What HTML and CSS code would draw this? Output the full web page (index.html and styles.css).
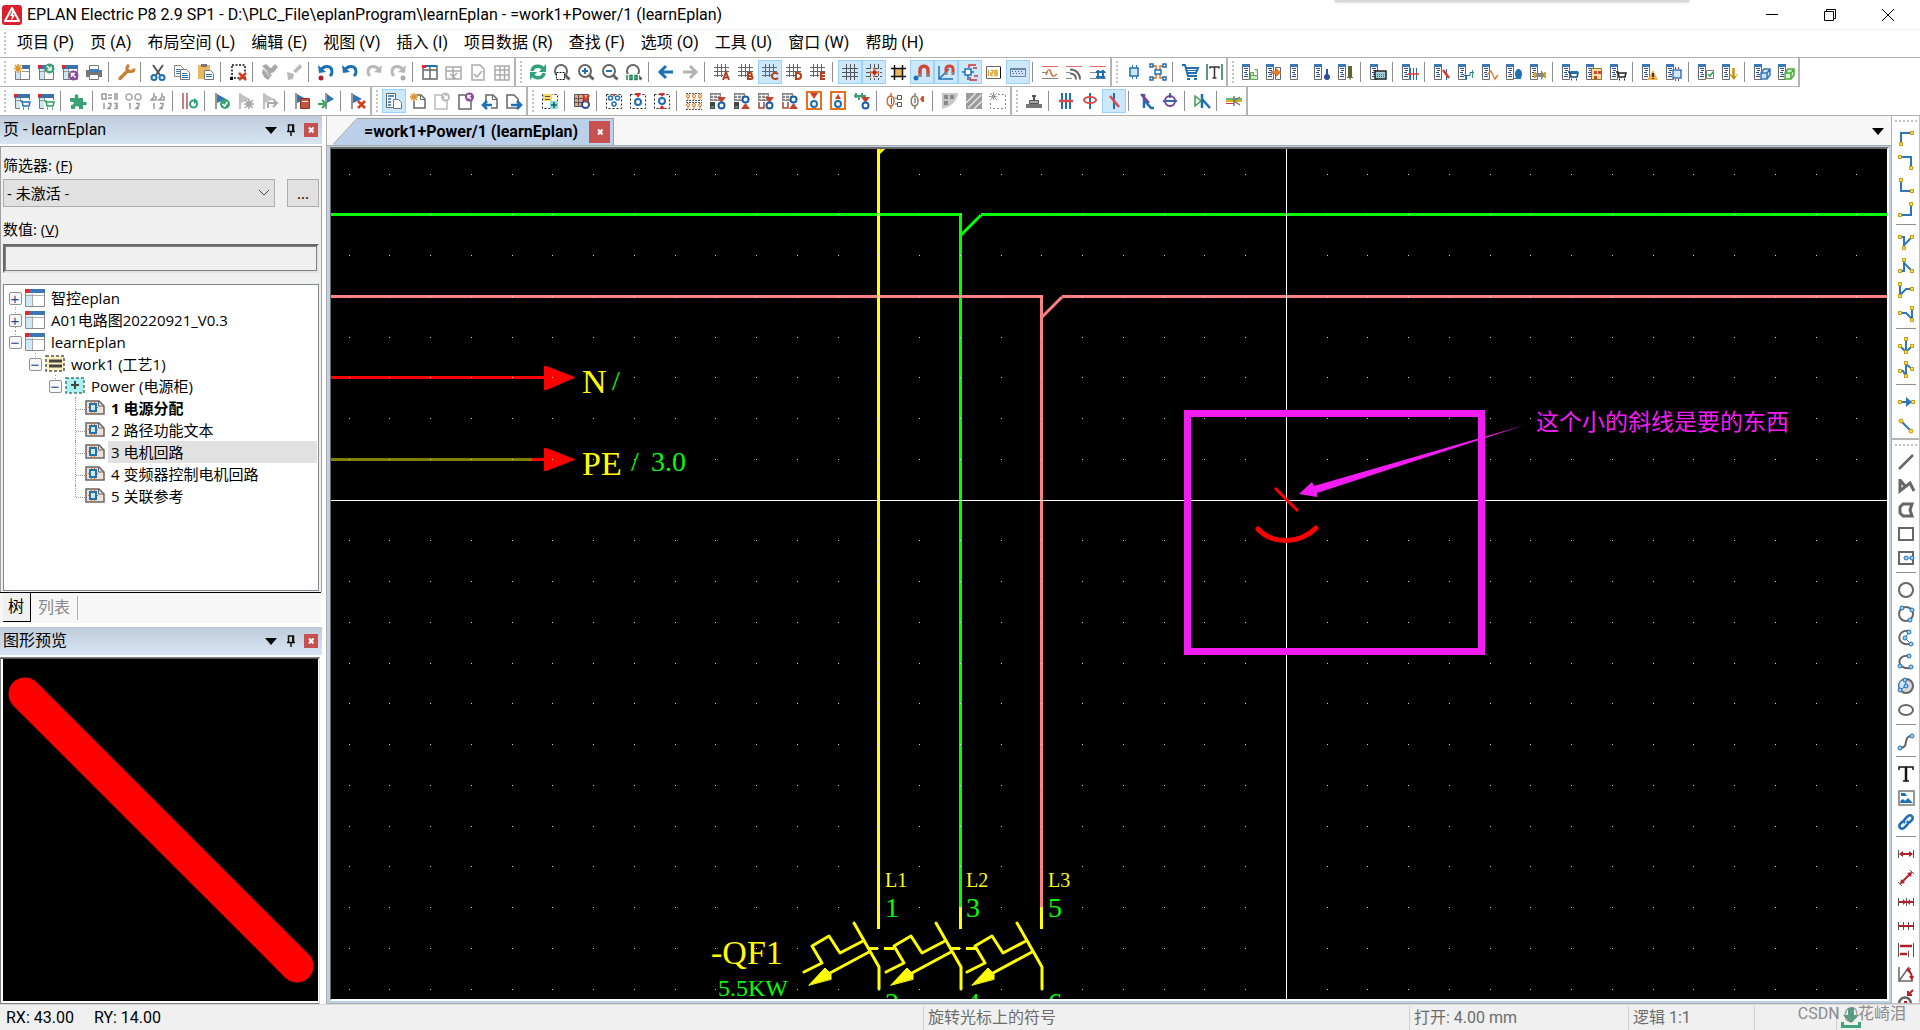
FILE: index.html
```html
<!DOCTYPE html>
<html lang="zh-CN">
<head>
<meta charset="utf-8">
<title>EPLAN Electric P8</title>
<link rel="stylesheet" href="styles.css">
</head>
<body>
<svg class="sprite" aria-hidden="true">
  <defs>
    <g id="b-win"><path fill="#fff" stroke="#777" d="M5.5 8.5h14v11h-14z"/><path fill="#3c72ac" d="M4 5h16v4H4z"/><path fill="#e22" d="M4 5h4v3H4z"/><path fill="#cfe6f5" d="M6 9h4v10H6z"/><path stroke="#999" d="M10.5 9v10M6 11.500h14"/></g>
    <g id="b-doc"><path fill="#fff" stroke="#6b6b6b" d="M4.500 6.500h7v13h-7z"/><path fill="#3b77b8" d="M4 4h8v3H4z"/><path stroke="#2b4a9b" d="M6 8.500h4M7 10.500h3M6 12.500h3M7 14.500h3M6 16.500h4"/></g>
    <g id="b-page"><path fill="#fff" stroke="#666" stroke-width="1.500" d="M8 6h7l4 4v9H8z"/><path stroke="#666" d="M14.500 6v4.500H19"/></g>
    <g id="b-grid"><path stroke="#555" d="M8.500 4v16M12.500 4v16M16.500 4v16M4 8.500h16M4 12.500h16M4 16.500h16"/></g>
    <g id="b-grids"><path stroke="#666" d="M7.500 4v13M11.500 4v13M15.500 4v9M4 7.500h15M4 11.500h15M4 15.500h9"/></g>
    <g id="b-cart" stroke-width="1.500"><path d="M10 12h2l1 5h6l1-4h-7"/><path d="M13 19.500h1M18 19.500h1" stroke-width="2"/></g>
    <g id="b-flag"><path stroke="#777" stroke-width="1.500" d="M6 4v16"/><path fill="#2d76b8" d="M7 5l9 5-9 4z"/></g>
    <g id="b-gflag"><path stroke="#aaa" stroke-width="1.500" d="M6 4v16"/><path fill="#c4c4c4" d="M7 5l9 5-9 4z"/></g>
    <g id="b-net"><path fill="#8a8a8a" d="M4 4h11v8H4z"/><path stroke="#eee" d="M5 6.500h9M5 9.500h9M7.500 5v6M11.500 5v6"/></g>
    <g id="b-dash"><path stroke="#222" stroke-dasharray="2 2" d="M4.500 5.500h15v14h-15z"/></g>
    <g id="b-down"><path fill="#c5432b" d="M11 8h9l-4.500 6z"/><circle cx="15.500" cy="16.500" r="3" fill="#fff" stroke="#1a5fa6" stroke-width="2"/></g>
    <g id="b-up"><path fill="#c5432b" d="M11 20h9l-4.500-6z"/><circle cx="15.500" cy="10.500" r="3" fill="#fff" stroke="#1a5fa6" stroke-width="2"/></g>
    <g id="dot"><path fill="#ffe066" stroke="#c8960c" d="M-1.500-1.500h3v3h-3z"/></g>
    <g id="bdot"><circle r="2" fill="#9fd0f5" stroke="#1f6fb5"/></g>

    <symbol id="new" viewBox="0 0 24 24"><use href="#b-win"/><path fill="#fff" d="M4 4h8v8H4z"/><path stroke="#e0962c" stroke-width="1.500" d="M8 4v9M4 8.500h9M5 5l6 7M11 5l-6 7"/></symbol>
    <symbol id="open" viewBox="0 0 24 24"><use href="#b-win"/><circle cx="15.500" cy="8.500" r="5" fill="#3aa173"/><path stroke="#fff" stroke-width="1.500" d="M13 6l4 4M17 6.500V10h-3.500"/></symbol>
    <symbol id="closep" viewBox="0 0 24 24"><use href="#b-win"/><circle cx="15.500" cy="15.500" r="5" fill="#8a4a9e"/><path stroke="#fff" stroke-width="1.500" d="M17.500 17.500l-4-4M13.500 17v-3.500H17"/></symbol>
    <symbol id="print" viewBox="0 0 24 24"><path fill="#777" d="M4 10h16v7H4z"/><path fill="#fff" stroke="#777" d="M7.500 5.500h9v5h-9z"/><path fill="#3b82c4" d="M7 9h10v3H7z"/><path fill="#fff" stroke="#777" d="M7.500 14.500h9v5h-9z"/></symbol>
    <symbol id="wrench" viewBox="0 0 24 24"><path stroke="#c97f34" stroke-width="3.500" stroke-linecap="round" d="M6 18.500l8-8"/><path stroke="#c97f34" stroke-width="3" d="M15 5c-3 2-3 7 2 6.500 2 0 3-1 3-3"/></symbol>
    <symbol id="cut" viewBox="0 0 24 24"><path stroke="#555" stroke-width="2" d="M7 5l7 10M17 5l-7 10"/><circle cx="8" cy="17.500" r="2.500" stroke="#1f6fb5" stroke-width="2"/><circle cx="16" cy="17.500" r="2.500" stroke="#1f6fb5" stroke-width="2"/></symbol>
    <symbol id="copy" viewBox="0 0 24 24"><path fill="#fff" stroke="#888" d="M4.500 5.500h6l3 3v8h-9z"/><path stroke="#3b82c4" d="M6 9.500h4M6 11.500h4M6 13.500h4"/><path fill="#fff" stroke="#777" d="M10.500 9.500h6l3 3v7h-9z"/><path stroke="#1f6fb5" d="M12 13.500h5M12 15.500h6M12 17.500h6"/></symbol>
    <symbol id="paste" viewBox="0 0 24 24"><path fill="#eeb65c" d="M4 5h12v14H4z"/><path fill="#777" d="M7 4h6v3H7z"/><path fill="#fff" stroke="#777" d="M10.500 10.500h6l3 3v6h-9z"/><path stroke="#1f6fb5" d="M12 14.500h6M12 16.500h6"/></symbol>
    <symbol id="seldel" viewBox="0 0 24 24"><path stroke="#111" stroke-width="1.500" stroke-dasharray="2 1.500" d="M6 5h13v13H6z"/><path fill="#111" d="M4 17h3v3H4z"/><path stroke="#d63a1e" stroke-width="2.500" d="M13 13l7 7M20 13l-7 7"/></symbol>
    <symbol id="brush" viewBox="0 0 24 24"><path fill="#a8a8a8" d="M17 4l3 3-5 6-4-3zM5 9l9 6-4 5-4-3-2-4z"/><path fill="#a8a8a8" d="M4 6l4-2 8 7-4 3z"/><path stroke="#ddd" d="M7 11l5 6"/></symbol>
    <symbol id="brush2" viewBox="0 0 24 24"><path fill="#b8b8b8" d="M18 4l2 3-6 6-3-2zM5 12l7 2-1 5-5 1z"/></symbol>
    <symbol id="undo" viewBox="0 0 24 24"><path fill="#1f6fb5" d="M4 5l1 8 7-1z"/><path stroke="#1f6fb5" stroke-width="3" d="M7 10c3-5 11-5 11 2 0 2-1 3-2 4"/></symbol>
    <symbol id="undol" viewBox="0 0 24 24"><use href="#undo" width="24" height="24"/><circle cx="7" cy="18" r="2.500" fill="#b3202a"/></symbol>
    <symbol id="redo" viewBox="0 0 24 24"><path fill="#b8b8b8" d="M20 5l-1 8-7-1z"/><path stroke="#b8b8b8" stroke-width="3" d="M17 10C14 5 6 5 6 12c0 2 1 3 2 4"/></symbol>
    <symbol id="redol" viewBox="0 0 24 24"><use href="#redo" width="24" height="24"/><circle cx="17" cy="18" r="2.500" fill="#aaa"/></symbol>
    <symbol id="layout" viewBox="0 0 24 24"><path fill="#fff" stroke="#666" stroke-width="1.500" d="M5 6h14v13H5zM5 10h14M12 6v13"/><path stroke="#1f6fb5" stroke-width="2" d="M5 6h14"/><path fill="#e22" d="M4 5h4v3H4z"/></symbol>
    <symbol id="lay2" viewBox="0 0 24 24"><path stroke="#aaa" stroke-width="1.500" d="M4 7h15v12H4zM4 11h15M11 7v12M8 14l6 5M15 13l-4 4"/></symbol>
    <symbol id="pcheck" viewBox="0 0 24 24"><path stroke="#aaa" stroke-width="1.500" d="M6 5h8l4 4v11H6zM8 14l3 3 5-6"/></symbol>
    <symbol id="gtable" viewBox="0 0 24 24"><path stroke="#aaa" stroke-width="1.500" d="M5 6h14v14H5zM5 10h14M5 15h14M10 6v14M14.500 6v14"/></symbol>
    <symbol id="refresh" viewBox="0 0 24 24"><path stroke="#2fa37b" stroke-width="3.500" d="M6 11c1-6 9-6 11-2M18 13c-1 6-9 6-11 2"/><path fill="#2fa37b" d="M20 4v8h-7zM4 20v-8h7z"/></symbol>
    <symbol id="mag" viewBox="0 0 24 24"><circle cx="11" cy="11" r="6" stroke="#666" stroke-width="2"/><path stroke="#666" stroke-width="3" d="M15.500 15.500l4 4"/></symbol>
    <symbol id="zwin" viewBox="0 0 24 24"><use href="#mag" width="24" height="24"/><path fill="#fff" stroke="#111" stroke-dasharray="2 1" d="M6.500 12.500h8v7h-8z"/></symbol>
    <symbol id="zin" viewBox="0 0 24 24"><use href="#mag" width="24" height="24"/><path stroke="#1f6fb5" stroke-width="2" d="M8 11h6M11 8v6"/></symbol>
    <symbol id="zout" viewBox="0 0 24 24"><use href="#mag" width="24" height="24"/><path stroke="#1f6fb5" stroke-width="2" d="M8 11h6"/></symbol>
    <symbol id="z100" viewBox="0 0 24 24"><use href="#mag" width="24" height="24"/><path fill="#fff" d="M4 14h13v7H4z"/><path stroke="#16804f" stroke-width="1.500" d="M5 15v5M8 15.500h2v4H8zM13 15.500h2v4h-2z"/></symbol>
    <symbol id="left" viewBox="0 0 24 24"><path stroke="#1f6fb5" stroke-width="3" d="M19 12H7M12 6l-6 6 6 6"/></symbol>
    <symbol id="right" viewBox="0 0 24 24"><path stroke="#b3b3b3" stroke-width="3" d="M5 12h12M12 6l6 6-6 6"/></symbol>
    <symbol id="gA" viewBox="0 0 24 24"><use href="#b-grids"/><path stroke="#b5411c" stroke-width="2" d="M13 20l3-8 3 8M14 17.500h4"/></symbol>
    <symbol id="gB" viewBox="0 0 24 24"><use href="#b-grids"/><path stroke="#b5411c" stroke-width="2" d="M14 12v7h3c2 0 2-3 0-3h-3 3c1 0 1-3 0-3h-3"/></symbol>
    <symbol id="gC" viewBox="0 0 24 24"><use href="#b-grids"/><path stroke="#b5411c" stroke-width="2" d="M20 14c-2-2-6-1-6 2s4 4 6 2"/></symbol>
    <symbol id="gD" viewBox="0 0 24 24"><use href="#b-grids"/><path stroke="#b5411c" stroke-width="2" d="M14 13v6h2c4 0 4-6 0-6z"/></symbol>
    <symbol id="gE" viewBox="0 0 24 24"><use href="#b-grids"/><path stroke="#b5411c" stroke-width="2" d="M19 13h-4v6h4M15 16h4"/></symbol>
    <symbol id="grid" viewBox="0 0 24 24"><use href="#b-grid"/></symbol>
    <symbol id="gsnap" viewBox="0 0 24 24"><path stroke="#555" stroke-dasharray="5 2" d="M8.500 4v16M12.500 4v16M16.500 4v16M4 8.500h16M4 12.500h16M4 16.500h16"/><path stroke="#e8701c" stroke-width="2" d="M12.500 8v9M8 12.500h9"/><circle cx="12.500" cy="12.500" r="2" fill="#b3202a"/></symbol>
    <symbol id="galign" viewBox="0 0 24 24"><path fill="#eeb65c" d="M9 9h7v7H9z"/><path stroke="#111" stroke-width="1.500" d="M8.500 5v15M16.500 5v15M5 8.500h15M5 16.500h15"/></symbol>
    <symbol id="magnet" viewBox="0 0 24 24"><path stroke="#cf4a35" stroke-width="3.500" d="M10 16v-6c0-5 8-5 8 0v6"/><path stroke="#888" stroke-width="3.500" d="M10 14v3M18 14v3"/><circle cx="6" cy="18" r="2.500" fill="#1f6fb5"/></symbol>
    <symbol id="magnet2" viewBox="0 0 24 24"><path stroke="#1f6fb5" stroke-width="1.500" d="M5 6v13h14M5 19L15 9"/><path stroke="#cf4a35" stroke-width="3" d="M12 13V9c0-4 7-4 7 0v4"/><path stroke="#888" stroke-width="3" d="M12 12v3M19 12v3"/></symbol>
    <symbol id="smart" viewBox="0 0 24 24"><path fill="#fff" stroke="#1f6fb5" stroke-width="1.500" d="M7 9h6v6H7zM4 12h3M10 15v5M13 12h3"/><path stroke="#d32f2f" stroke-width="1.500" d="M11 8V5h7M15 8h4M16 16h4M12 17v3h7"/></symbol>
    <symbol id="num" viewBox="0 0 24 24"><path fill="#fff" stroke="#666" d="M4.500 6.500h14v12h-14z"/><path stroke="#e0a82c" stroke-width="1.500" d="M6.500 10v6M9 10.500h2v2.500H9v2.500h2M13 10.500h2v5h-2zM13 13h2"/><path stroke="#111" d="M18.500 7v11"/></symbol>
    <symbol id="keys" viewBox="0 0 24 24"><path fill="#cfe0f2" stroke="#6b87a8" d="M4.500 8.500h15v8h-15z"/><path stroke="#6b87a8" stroke-width="2" d="M4 9h16"/><path stroke="#3d62a8" stroke-dasharray="1 2" d="M6 11.500h12M7 13.500h10"/></symbol>
    <symbol id="w1" viewBox="0 0 24 24"><path stroke="#e66" d="M4 6.500h16"/><path stroke="#888" d="M4 18.500h16M4 12.500h6"/><path stroke="#d0713c" stroke-width="1.500" d="M8 15c2-7 4-6 5-2s3 4 6 1"/></symbol>
    <symbol id="w2" viewBox="0 0 24 24"><path stroke="#e66" d="M4 6.500h16"/><path stroke="#666" stroke-width="2" d="M8 9.500c6 0 10 4 10 10M8 13.500c4 0 6 2 6 6"/><path stroke="#888" d="M4 12.500h4M4 18.500h6"/></symbol>
    <symbol id="w3" viewBox="0 0 24 24"><path stroke="#e66" d="M4 6.500h16"/><path stroke="#888" d="M4 12.500h16M4 18.500h16"/><path stroke="#1f6fb5" stroke-width="2" d="M12 10v9M17 10v9M10 12h9M10 17h9"/></symbol>
    <symbol id="chip" viewBox="0 0 24 24"><path fill="#cfe6f5" stroke="#1f6fb5" stroke-width="1.500" d="M8 8h8v8H8z"/><path stroke="#1f6fb5" d="M10.500 5v3M14.500 5v3M10.500 16v3M14.500 16v3"/></symbol>
    <symbol id="tree" viewBox="0 0 24 24"><path stroke="#e8701c" stroke-width="1.500" d="M7 6h3v12H7M17 6h-3v12h3"/><path fill="#fff" stroke="#1f6fb5" stroke-width="1.500" d="M4 4h3v3H4zM17 4h3v3h-3zM4 17h3v3H4zM17 17h3v3h-3zM9 10h6v4H9z"/></symbol>
    <symbol id="cart" viewBox="0 0 24 24"><path fill="#fff" stroke="#1f6fb5" stroke-width="2" d="M4 5h3l3 11h9M8 8h12l-2 5H9"/><path stroke="#1f6fb5" d="M9 10.500h10"/><path fill="#1f6fb5" d="M9 18h3v2H9zM16 18h3v2h-3z"/></symbol>
    <symbol id="txt" viewBox="0 0 24 24"><path stroke="#16804f" stroke-width="1.500" d="M5 4v16M20 4v16"/><path stroke="#333" stroke-width="1.500" d="M8 8.500V7h9v1.500M12.500 7v11M10.500 18h4"/></symbol>

    <symbol id="d1" viewBox="0 0 24 24"><use href="#b-doc"/><path fill="#cfe8cb" stroke="#5aa64b" d="M12.500 12.500h3v3h-3zM16.500 9.500h3v10h-7v-4h7"/></symbol>
    <symbol id="d2" viewBox="0 0 24 24"><use href="#b-doc"/><path fill="#fff" stroke="#666" d="M13.500 7.500h5v12h-5z"/><path fill="#e07b2c" d="M9 11h5V8l5 4.500-5 4.500v-3H9z"/></symbol>
    <symbol id="d3" viewBox="0 0 24 24"><use href="#b-doc"/></symbol>
    <symbol id="d4" viewBox="0 0 24 24"><use href="#b-doc"/><path stroke="#2e4ea0" stroke-width="2" d="M17 9v6"/><circle cx="17" cy="17" r="3" fill="#2e4ea0"/></symbol>
    <symbol id="d5" viewBox="0 0 24 24"><use href="#b-doc"/><path stroke="#5d6630" stroke-width="4" d="M16 6v11"/><path stroke="#5d6630" d="M13 17.500h6M16 17v3"/></symbol>
    <symbol id="d6" viewBox="0 0 24 24"><use href="#b-doc"/><path fill="#9fd0d8" stroke="#222" stroke-width="1.500" d="M9 11h11v8H9z"/><path stroke="#c33" stroke-dasharray="1 1" d="M11 14.500h8M11 16.500h8"/></symbol>
    <symbol id="d7" viewBox="0 0 24 24"><use href="#b-doc"/><path stroke="#1f6fb5" d="M12.500 8v12M15.500 8v12M18.500 8v12"/><path stroke="#e33" stroke-width="1.500" d="M10 14h11"/></symbol>
    <symbol id="d8" viewBox="0 0 24 24"><use href="#b-doc"/><path stroke="#1f6fb5" d="M16.500 9v11"/><path stroke="#e33" stroke-width="2.500" d="M13 10l6 8"/></symbol>
    <symbol id="d9" viewBox="0 0 24 24"><use href="#b-doc"/><path stroke="#1f6fb5" d="M10 15.500h6v-3h4M12.500 15v5"/><path stroke="#3a9d6a" d="M18.500 10v8"/></symbol>
    <symbol id="d10" viewBox="0 0 24 24"><use href="#b-doc"/><path stroke="#d08a3e" stroke-width="1.500" d="M9 15l4-4 4 8 3-4"/></symbol>
    <symbol id="d11" viewBox="0 0 24 24"><use href="#b-doc"/><ellipse cx="16.500" cy="14" rx="3.500" ry="5" fill="#1f6fb5"/><path stroke="#1f6fb5" d="M12 18.500h7"/></symbol>
    <symbol id="d12" viewBox="0 0 24 24"><use href="#b-doc"/><path fill="#888" d="M10 13h5v-3l4 5-4 5v-3h-5z"/><path fill="#d9a514" d="M8 12h2v6H8zM18 12h2v6h-2z"/></symbol>
    <symbol id="d13" viewBox="0 0 24 24"><use href="#b-doc"/><use href="#b-cart" stroke="#17497a"/><path fill="#1f6fb5" d="M13 11h7v3h-7z"/></symbol>
    <symbol id="d14" viewBox="0 0 24 24"><use href="#b-doc"/><path fill="#f5e0a0" stroke="#8a7a2a" d="M9.500 8.500h10v11h-10z"/><path fill="#d2462c" d="M12 11h3v3h-3zM16 11h3v3h-3zM12 16h3v3h-3z"/></symbol>
    <symbol id="d15" viewBox="0 0 24 24"><use href="#b-doc"/><use href="#b-cart" stroke="#222"/></symbol>
    <symbol id="d16" viewBox="0 0 24 24"><use href="#b-doc"/><path fill="#efae4b" d="M15 10l5 10H9z"/><path stroke="#111" stroke-width="1.500" d="M15 13v4M15 18v1"/></symbol>
    <symbol id="d17" viewBox="0 0 24 24"><use href="#b-doc"/><path fill="#d5e6fa" stroke="#3b77b8" stroke-width="1.500" d="M11 10h8v8h-8z"/><path stroke="#c33" d="M13.500 7v2M16.500 7v2M13.500 19v2M16.500 19v2"/></symbol>
    <symbol id="d18" viewBox="0 0 24 24"><use href="#b-doc"/><path fill="#fff" stroke="#777" d="M12.500 10.500h7v8h-7z"/><path stroke="#2fa35b" stroke-width="1.500" d="M14 14l2 2 3-4"/></symbol>
    <symbol id="d19" viewBox="0 0 24 24"><use href="#b-doc"/><path stroke="#c4930f" stroke-width="2.500" d="M15.500 8v10"/><path fill="#c4930f" d="M11 14h2l1 2h4l1-2h1l-4 6z"/></symbol>
    <symbol id="d20" viewBox="0 0 24 24"><use href="#b-doc"/><path fill="#cfe3fb" stroke="#3b77b8" stroke-width="1.500" d="M11 13l3-4h6v6l-3 4h-6zM11 13h6v6M17 13l3-4"/></symbol>
    <symbol id="d21" viewBox="0 0 24 24"><use href="#b-doc"/><path fill="#d5f3cf" stroke="#4fa83d" stroke-width="1.500" d="M11 13l3-4h6v6l-3 4h-6zM11 13h6v6M17 13l3-4"/></symbol>

    <symbol id="wc" viewBox="0 0 24 24"><use href="#b-win"/><path fill="#fff" d="M10 11h10v9H10z"/><use href="#b-cart" stroke="#1f6fb5"/></symbol>
    <symbol id="wcg" viewBox="0 0 24 24"><use href="#b-win"/><path fill="#fff" d="M10 11h10v9H10z"/><use href="#b-cart" stroke="#2e9a5c"/></symbol>
    <symbol id="puzzle" viewBox="0 0 24 24"><path fill="#3aa173" d="M4 9h5c-2-5 5-5 3 0h5v4c5-2 5 5 0 3v4h-4c1-4-5-4-4 0H5v-4c4 0 4-4-1-3z"/></symbol>
    <symbol id="n1" viewBox="0 0 24 24"><path stroke="#999" stroke-width="1.500" d="M4 5h4v5H4zM10 6h4M10 9h4M17 4v7M19 4v7M6 14v6M10 14.500h3v2l-3 3h3M16 14.500h3v5h-3M17 17h2"/></symbol>
    <symbol id="n2" viewBox="0 0 24 24"><path stroke="#999" stroke-width="1.500" d="M8 14v6M14 14.500h3v2l-3 3h3"/><circle cx="7" cy="8" r="3" stroke="#aaa" stroke-width="1.500"/><circle cx="16" cy="8" r="3" stroke="#aaa" stroke-width="1.500"/></symbol>
    <symbol id="n3" viewBox="0 0 24 24"><path stroke="#999" stroke-width="1.500" d="M8 14v6M14 14.500h3v2l-3 3h3M8 4v4l-3 3h5V7M16 4v4l-3 3h5V7"/></symbol>
    <symbol id="busr" viewBox="0 0 24 24"><path stroke="#b4545a" stroke-width="1.500" d="M5 4v16M9 4v16"/><circle cx="15.500" cy="15" r="3.500" stroke="#2fa37b" stroke-width="2"/><path fill="#2fa37b" d="M16 9l4 3-4 3z"/></symbol>
    <symbol id="f1" viewBox="0 0 24 24"><use href="#b-flag"/><circle cx="15" cy="15" r="5" fill="#3aa173"/><path stroke="#fff" stroke-width="1.500" d="M12.500 15l2 2 3-4"/></symbol>
    <symbol id="f2" viewBox="0 0 24 24"><use href="#b-gflag"/><path stroke="#aaa" stroke-width="1.500" d="M10 15h10M15 10v10M11 11l8 8M19 11l-8 8"/><circle cx="15" cy="15" r="3" fill="#aaa"/></symbol>
    <symbol id="f3" viewBox="0 0 24 24"><use href="#b-gflag"/><path stroke="#aaa" stroke-width="2" d="M10 19v-5h8M15 10l4 4-4 4"/></symbol>
    <symbol id="f4" viewBox="0 0 24 24"><use href="#b-flag"/><path fill="#c5543f" stroke="#8c3423" d="M10.500 9.500h9v10h-9z"/><path stroke="#fff" d="M12 12.500h6"/></symbol>
    <symbol id="f5" viewBox="0 0 24 24"><path stroke="#777" stroke-width="1.500" d="M12 4v16"/><path fill="#2d76b8" d="M13 5l7 5-7 4z"/><path stroke="#2fa35b" stroke-width="2" d="M4 15h6M8 11l4 4-4 4"/></symbol>
    <symbol id="f6" viewBox="0 0 24 24"><use href="#b-flag"/><path stroke="#d63a1e" stroke-width="2.500" d="M12 12l7 7M19 12l-7 7"/></symbol>
    <symbol id="pg0" viewBox="0 0 24 24"><path fill="#fff" stroke="#666" d="M4.500 4.500h9v14h-9z"/><path stroke="#1f6fb5" stroke-width="1.500" d="M6 7h6M6 10h3M6 13h3M6 16h3"/><path fill="#fff" stroke="#777" d="M11.500 10.500h5l3 3v6h-8z"/></symbol>
    <symbol id="pg1" viewBox="0 0 24 24"><use href="#b-page"/><path fill="#fff" d="M4 4h7v8H4z"/><path stroke="#e0962c" stroke-width="1.500" d="M8 4v8M4 8h8M5 5l6 6M11 5l-6 6"/></symbol>
    <symbol id="pg2" viewBox="0 0 24 24"><path stroke="#bbb" stroke-width="1.500" d="M5 6h9l3 3v11H5z"/><circle cx="15.500" cy="8" r="4.500" fill="#bbb"/><path stroke="#fff" stroke-width="1.500" d="M13.500 6l3.500 3.500M17 6.500v3h-3"/></symbol>
    <symbol id="pg3" viewBox="0 0 24 24"><path stroke="#666" stroke-width="1.500" d="M5 6h9l3 3v11H5z"/><circle cx="15.500" cy="8" r="4.500" fill="#8a4a9e"/><path stroke="#fff" stroke-width="1.500" d="M17 10l-3.500-3.500M14 9.500v-3h3"/></symbol>
    <symbol id="pg4" viewBox="0 0 24 24"><use href="#b-page"/><path fill="#fff" d="M4 12h9v8H4z"/><path stroke="#1f6fb5" stroke-width="2.500" d="M14 16H6M9 12l-4 4 4 4"/></symbol>
    <symbol id="pg5" viewBox="0 0 24 24"><path fill="#fff" stroke="#666" stroke-width="1.500" d="M5 6h7l4 4v9H5z"/><path stroke="#1f6fb5" stroke-width="2.500" d="M9 16h9M15 12l4 4-4 4"/></symbol>
    <symbol id="st1" viewBox="0 0 24 24"><use href="#b-dash"/><path fill="#f5dc5a" d="M5 5h9v7H5z"/><path stroke="#555" d="M7 7.500h5M7 10.500h5"/><path fill="#8be0da" d="M12 12h8v8h-8z"/><path stroke="#16606b" stroke-width="1.500" d="M16 13v6M13 16h6"/></symbol>
    <symbol id="st2" viewBox="0 0 24 24"><path fill="#e8a48c" stroke="#555" d="M4.500 5.500h14v12h-14z"/><path stroke="#555" d="M4 9.500h15M4 13.500h15M8.500 5v13M13.500 5v13"/><circle cx="15.500" cy="15.500" r="3.500" fill="#fff" stroke="#2b4a9b" stroke-width="2"/><path stroke="#d63a1e" stroke-width="2" d="M13 6l3 6 3-6"/></symbol>
    <symbol id="s1" viewBox="0 0 24 24"><use href="#b-dash"/><g stroke="#1f6fb5" stroke-width="1.500"><circle cx="8.500" cy="9" r="2"/><circle cx="15.500" cy="9" r="2"/><circle cx="12" cy="15" r="2"/></g><path fill="#c5432b" d="M10 5h4l-2 3z"/></symbol>
    <symbol id="s2" viewBox="0 0 24 24"><use href="#b-dash"/><circle cx="12" cy="13" r="3" stroke="#1f6fb5" stroke-width="2"/><path fill="#e22" d="M9 4h6l-3 5z"/></symbol>
    <symbol id="s3" viewBox="0 0 24 24"><use href="#b-dash"/><circle cx="12" cy="12" r="3" stroke="#1f6fb5" stroke-width="2"/><path fill="#e22" d="M9 4h6l-3 4zM9 20h6l-3-4z"/></symbol>
    <symbol id="t0" viewBox="0 0 24 24"><path stroke="#555" stroke-dasharray="2 1" d="M4 4.500h16M4 11.500h16M4 13.500h16M4 20.500h16"/><g stroke="#e8701c"><circle cx="6" cy="7" r="1.500"/><circle cx="12" cy="7" r="1.500"/><circle cx="18" cy="7" r="1.500"/><circle cx="6" cy="16" r="1.500"/><circle cx="12" cy="16" r="1.500"/><circle cx="18" cy="16" r="1.500"/><path d="M6 8v3M12 8v3M18 8v3M6 17v3M12 17v3M18 17v3"/></g></symbol>
    <symbol id="t1" viewBox="0 0 24 24"><use href="#b-net"/><path fill="#444" d="M4 13h5v7H4z"/><path fill="#3aa173" d="M5 17h3v2H5z"/><use href="#b-down"/></symbol>
    <symbol id="t2" viewBox="0 0 24 24"><use href="#b-net"/><path fill="#444" d="M4 13h5v7H4z"/><path fill="#3aa173" d="M5 17h3v2H5z"/><use href="#b-up"/></symbol>
    <symbol id="t3" viewBox="0 0 24 24"><use href="#b-net"/><path stroke="#a8432c" stroke-width="1.500" d="M5 13v6h5v-6"/><use href="#b-down"/></symbol>
    <symbol id="t4" viewBox="0 0 24 24"><use href="#b-net"/><path stroke="#a8432c" stroke-width="1.500" d="M5 13v6h5v-6"/><use href="#b-up"/></symbol>
    <symbol id="t5" viewBox="0 0 24 24"><path fill="#fff" stroke="#e8701c" stroke-width="2" d="M5 3h14v17H5z"/><circle cx="12" cy="15" r="3" stroke="#1f6fb5" stroke-width="2"/><path fill="#c5432b" d="M8 4h8l-4 6z"/></symbol>
    <symbol id="t6" viewBox="0 0 24 24"><path fill="#fff" stroke="#e8701c" stroke-width="2" d="M5 3h14v17H5z"/><circle cx="12" cy="15" r="3" stroke="#1f6fb5" stroke-width="2"/><path fill="#c5432b" d="M9 10h6l-3-5z"/></symbol>
    <symbol id="t7" viewBox="0 0 24 24"><path stroke="#3aa173" stroke-width="2" d="M4 7h12M6 4v5M9 6v5M12 4v5"/><use href="#b-down"/></symbol>
    <symbol id="m1" viewBox="0 0 24 24"><path stroke="#d06a30" stroke-width="1.500" d="M9 4v3M9 17v3M9 7c-5 0-5 10 0 10 4-1 4-9 0-10"/><path stroke="#555" d="M9.500 9v6M13 9h3M13 15h3M15.500 6.500h4v4h-4zM15.500 13.500h4v4h-4z"/></symbol>
    <symbol id="m2" viewBox="0 0 24 24"><path stroke="#8a7a6a" stroke-width="1.500" d="M9 4v3M9 17v3M9 7c-5 0-5 10 0 10 4-1 4-9 0-10M9 9v5"/><path fill="#d9552c" d="M18 7v6h-2l-2-3 2-3z"/></symbol>
    <symbol id="h1" viewBox="0 0 24 24"><path fill="#c8c8c8" d="M4 4h16c0 8-8 14-16 16z"/><path fill="#888" d="M6 6h4v4H6zM12 6h4v4h-4zM6 12h4v4H6z"/></symbol>
    <symbol id="h2" viewBox="0 0 24 24"><path fill="#9a9a9a" d="M4 4h16v16H4z"/><path stroke="#e5e5e5" stroke-width="1.500" d="M4 14L14 4M6 19L19 6M12 20l8-8"/></symbol>
    <symbol id="h3" viewBox="0 0 24 24"><path stroke="#888" stroke-dasharray="2 2" d="M12 5.500h7.500v14h-15V12"/><path stroke="#999" d="M7.500 3v8M3 7.500h8M4 4l7 7M11 4l-7 7"/></symbol>
    <symbol id="term" viewBox="0 0 24 24"><path fill="#777" d="M4 15h16v4H4z"/><path fill="#aaa" stroke="#555" d="M7.500 11.500h9v3h-9z"/><path stroke="#555" stroke-width="2" d="M12 6v5M10 7h4"/></symbol>
    <symbol id="c1" viewBox="0 0 24 24"><path stroke="#1f6fb5" stroke-width="2" d="M8 4v16M12 4v16M16 4v16"/><path stroke="#e04848" stroke-width="2.500" d="M5 12h14"/></symbol>
    <symbol id="c2" viewBox="0 0 24 24"><path stroke="#1f6fb5" stroke-width="2" d="M12 4v16"/><ellipse cx="12" cy="11" rx="6" ry="3" stroke="#e04848" stroke-width="2"/></symbol>
    <symbol id="c3" viewBox="0 0 24 24"><path stroke="#1f6fb5" stroke-width="2" d="M12 4v16"/><path stroke="#e04848" stroke-width="2.500" d="M8 7l9 11"/></symbol>
    <symbol id="c4" viewBox="0 0 24 24"><path stroke="#1f6fb5" stroke-width="2.500" d="M10 5v14M10 11l7 8h3"/><path stroke="#7b3f98" stroke-width="2.500" d="M7 5l8 9"/></symbol>
    <symbol id="c5" viewBox="0 0 24 24"><path stroke="#1f6fb5" stroke-width="2" d="M12 4v5M5 12h14"/><circle cx="12" cy="12" r="5" stroke="#7b3f98" stroke-width="2"/></symbol>
    <symbol id="c6" viewBox="0 0 24 24"><path stroke="#3aa14a" stroke-width="1.500" d="M5 7v10l6-5z"/><path stroke="#1f6fb5" stroke-width="2.500" d="M12 5v14M12 10l8 9"/></symbol>
    <symbol id="c7" viewBox="0 0 24 24"><path stroke="#3aa14a" stroke-width="1.500" d="M4 10h16"/><path stroke="#e0b21c" stroke-width="2" d="M4 12h16"/><path stroke="#c33" d="M4 14.500h8"/><path stroke="#777" stroke-width="1.500" d="M12 7v10M18 8l-6 4 6 4"/></symbol>

    <symbol id="r1" viewBox="0 0 24 24"><path stroke="#2d76b8" stroke-width="2" d="M7 18V7h11"/><use href="#dot" x="7" y="18"/><use href="#dot" x="18" y="7"/></symbol>
    <symbol id="r2" viewBox="0 0 24 24"><path stroke="#2d76b8" stroke-width="2" d="M6 7h11v11"/><use href="#dot" x="6" y="7"/><use href="#dot" x="17" y="18"/></symbol>
    <symbol id="r3" viewBox="0 0 24 24"><path stroke="#2d76b8" stroke-width="2" d="M7 6v11h11"/><use href="#dot" x="7" y="6"/><use href="#dot" x="18" y="17"/></symbol>
    <symbol id="r4" viewBox="0 0 24 24"><path stroke="#2d76b8" stroke-width="2" d="M17 6v11H6"/><use href="#dot" x="17" y="6"/><use href="#dot" x="6" y="17"/></symbol>
    <symbol id="r5" viewBox="0 0 24 24"><path stroke="#2d76b8" stroke-width="2" d="M6 7h4v11M18 7l-8 8"/><use href="#dot" x="6" y="7"/><use href="#dot" x="10" y="18"/><use href="#dot" x="18" y="7"/></symbol>
    <symbol id="r6" viewBox="0 0 24 24"><path stroke="#2d76b8" stroke-width="2" d="M10 6v11H6M10 9l8 8"/><use href="#dot" x="10" y="6"/><use href="#dot" x="6" y="17"/><use href="#dot" x="18" y="17"/></symbol>
    <symbol id="r7" viewBox="0 0 24 24"><path stroke="#2d76b8" stroke-width="2" d="M6 6v12M18 11h-6l-6 6"/><use href="#dot" x="6" y="6"/><use href="#dot" x="6" y="18"/><use href="#dot" x="18" y="11"/></symbol>
    <symbol id="r8" viewBox="0 0 24 24"><path stroke="#2d76b8" stroke-width="2" d="M18 6v12M6 11h6l6 6"/><use href="#dot" x="18" y="6"/><use href="#dot" x="18" y="18"/><use href="#dot" x="6" y="11"/></symbol>
    <symbol id="r9" viewBox="0 0 24 24"><path stroke="#2d76b8" stroke-width="2" d="M12 5v13M6 12l6 6 6-6"/><use href="#dot" x="12" y="5"/><use href="#dot" x="12" y="18"/><use href="#dot" x="6" y="12"/><use href="#dot" x="18" y="12"/></symbol>
    <symbol id="r10" viewBox="0 0 24 24"><path stroke="#2d76b8" stroke-width="2" d="M12 5v13M6 13h3l3 5M12 6l6 5"/><use href="#dot" x="12" y="5"/><use href="#dot" x="12" y="18"/><use href="#dot" x="6" y="13"/><use href="#dot" x="18" y="11"/></symbol>
    <symbol id="r11" viewBox="0 0 24 24"><path stroke="#2d76b8" stroke-width="2" d="M6 12h12"/><path fill="#2d76b8" d="M12 7l6 5-6 5z"/><use href="#dot" x="6" y="12"/><use href="#dot" x="19" y="12"/></symbol>
    <symbol id="r12" viewBox="0 0 24 24"><path stroke="#2d76b8" stroke-width="2" d="M7 7l10 10"/><circle cx="7" cy="7" r="2" fill="#ffd84d" stroke="#c8960c"/><circle cx="17" cy="17" r="2" fill="#ffd84d" stroke="#c8960c"/></symbol>
    <symbol id="line" viewBox="0 0 24 24"><path stroke="#666" stroke-width="2.500" d="M5 19L19 5"/></symbol>
    <symbol id="poly" viewBox="0 0 24 24"><path stroke="#666" stroke-width="3" d="M6 5v12l10-8 4 8M6 6l5 6"/></symbol>
    <symbol id="polyg" viewBox="0 0 24 24"><path stroke="#666" stroke-width="3" d="M9 6h9l-2 6 2 6H9l-3-3V9z"/></symbol>
    <symbol id="rect" viewBox="0 0 24 24"><path stroke="#666" stroke-width="2" d="M5 6h14v12H5z"/></symbol>
    <symbol id="rectc" viewBox="0 0 24 24"><path stroke="#666" stroke-width="2" d="M5 6h14v12H5z"/><path stroke="#1f6fb5" d="M12 12h6"/><use href="#bdot" x="12" y="12"/><use href="#bdot" x="18" y="12"/></symbol>
    <symbol id="circ" viewBox="0 0 24 24"><circle cx="12" cy="12" r="7" stroke="#666" stroke-width="2"/></symbol>
    <symbol id="circ3" viewBox="0 0 24 24"><circle cx="12" cy="12" r="7" stroke="#666" stroke-width="2"/><use href="#bdot" x="8" y="6"/><use href="#bdot" x="18" y="8"/><use href="#bdot" x="16" y="18"/></symbol>
    <symbol id="arcc" viewBox="0 0 24 24"><path stroke="#666" stroke-width="2" d="M15 5C2 3 2 20 15 18"/><path stroke="#1f6fb5" d="M15 6l-4 6 6 6"/><use href="#bdot" x="15" y="6"/><use href="#bdot" x="11" y="12"/><use href="#bdot" x="17" y="18"/></symbol>
    <symbol id="arc3" viewBox="0 0 24 24"><path stroke="#666" stroke-width="2" d="M15 6C2 4 2 20 16 18"/><use href="#bdot" x="15" y="6"/><use href="#bdot" x="6" y="16"/><use href="#bdot" x="17" y="17"/></symbol>
    <symbol id="sect" viewBox="0 0 24 24"><circle cx="12" cy="12" r="7" fill="#d8d8d8" stroke="#666" stroke-width="2"/><path fill="#cfe8fb" stroke="#1f6fb5" d="M12 12l-6 4C3 10 6 6 11 5z"/><use href="#bdot" x="12" y="12"/><use href="#bdot" x="11" y="6"/><use href="#bdot" x="6" y="16"/></symbol>
    <symbol id="ell" viewBox="0 0 24 24"><ellipse cx="12" cy="12" rx="7" ry="5" stroke="#666" stroke-width="2"/></symbol>
    <symbol id="spl" viewBox="0 0 24 24"><path stroke="#666" stroke-width="2" d="M6 18c10 0 2-12 12-12"/><use href="#bdot" x="6" y="18"/><use href="#bdot" x="18" y="6"/></symbol>
    <symbol id="T" viewBox="0 0 24 24"><path stroke="#111" stroke-width="1.500" d="M5 8V5h14v3M9 19h6"/><path stroke="#111" stroke-width="2.500" d="M12 5v14"/></symbol>
    <symbol id="img" viewBox="0 0 24 24"><path fill="#fff" stroke="#777" stroke-width="1.500" d="M5 5h15v14H5z"/><path fill="#1f6fb5" d="M7 7h4l2 3h-6zM6 17c1-5 4-4 5-2l3-3 5 5z"/></symbol>
    <symbol id="link" viewBox="0 0 24 24"><g stroke="#1f6fb5" stroke-width="2.500"><path d="M11 13c-2-2-1-3 1-5l2-2c3-2 6 1 4 4l-3 3"/><path d="M13 11c2 2 1 3-1 5l-2 2c-3 2-6-1-4-4l3-3"/></g></symbol>
    <symbol id="dim1" viewBox="0 0 24 24"><path stroke="#555" d="M4.500 8v8M19.500 8v8"/><path stroke="#b3202a" stroke-width="2" d="M6 12h12"/><path fill="#b3202a" d="M5 12l4-3v6zM19 12l-4-3v6z"/></symbol>
    <symbol id="dim2" viewBox="0 0 24 24"><path stroke="#555" d="M4 16l4 4M16 4l4 4"/><path stroke="#b3202a" stroke-width="2" d="M8 16l8-8"/><path fill="#b3202a" d="M6 18l1-5 4 4zM18 6l-5 1 4 4z"/></symbol>
    <symbol id="dim3" viewBox="0 0 24 24"><path stroke="#555" d="M4.500 8v8M19.500 8v8M12.500 8v8"/><path stroke="#b3202a" stroke-width="2" d="M5 12h14"/><path fill="#b3202a" d="M12 12L9 9v6zM13 12l3-3v6z"/></symbol>
    <symbol id="dim4" viewBox="0 0 24 24"><path stroke="#555" d="M4.500 8v8M9.500 8v8M14.500 8v8M19.500 8v8"/><path stroke="#b3202a" stroke-width="2" d="M5 12h14"/></symbol>
    <symbol id="dim5" viewBox="0 0 24 24"><path stroke="#555" d="M4.500 5v14M19.500 5v14M14.500 13v6"/><path stroke="#b3202a" stroke-width="2.500" d="M6 8h12M6 16h7"/></symbol>
    <symbol id="dim6" viewBox="0 0 24 24"><path stroke="#666" stroke-width="1.500" d="M19 19H5L15 5M5 5v14"/><path stroke="#b3202a" stroke-width="2" d="M14 8c4 3 4 6 4 9"/><path fill="#b3202a" d="M12 7l5-1-2 5zM15 14h5l-2 5z"/></symbol>
    <symbol id="dim7" viewBox="0 0 24 24"><path stroke="#666" stroke-width="2.500" d="M5 20c-1-11 12-11 12-2"/><path stroke="#b3202a" stroke-width="2" d="M19 4l-5 5M14 5v4h4M10 16h3"/></symbol>

    <symbol id="t-proj" viewBox="0 0 20 22"><path fill="#fff" stroke="#8a8a8a" d="M.5 4.500h19v15H.5z"/><path fill="#3b77b5" d="M0 2h20v4H0z"/><path fill="#e22" d="M0 2h4v4H0z"/><path fill="#cfe9f7" d="M1 7h6v12H1z"/><path stroke="#aaa" d="M7.500 7v12M1 8.500h18"/></symbol>
    <symbol id="t-fn" viewBox="0 0 20 22"><path fill="#faf0c0" stroke="#555" stroke-width="1.500" stroke-dasharray="3 2" d="M1 3h18v15H1z"/><path fill="none" stroke="#444" stroke-width="3" d="M4 8h13M4 13h13"/></symbol>
    <symbol id="t-loc" viewBox="0 0 20 22"><path fill="#a9f0ee" stroke="#4a7a7a" stroke-width="1.500" stroke-dasharray="3 2" d="M1 3h18v15H1z"/><path stroke="#444" stroke-width="2" d="M10 6v8M6 10h8"/></symbol>
    <symbol id="t-page" viewBox="0 0 20 22"><path fill="#f3dfd4" stroke="#666" stroke-width="1.500" d="M1 4h13l5 5v8H1z"/><path stroke="#666" d="M13.500 4v5H19"/><path fill="#cfe9f7" stroke="#2173b0" stroke-width="2" d="M5 7h6v7H5z"/><path stroke="#e0701c" d="M6.500 4v2M9.500 4v2M6.500 15v2M9.500 15v2M3 10.500h1M12 10.500h1"/></symbol>
    <symbol id="pin" viewBox="0 0 12 14"><path stroke="#111" stroke-width="1.500" d="M3.500 8V2h5v6M2 8.500h8M6 9v4"/><path stroke="#111" stroke-width="2" d="M8 2v6"/></symbol>
    <symbol id="tri" viewBox="0 0 12 8"><path fill="#000" d="M0 1h12L6 8z"/></symbol>
    <symbol id="x" viewBox="0 0 14 14"><path stroke="#fff" stroke-width="2" d="M5 4.500l4.500 5M9.500 4.500l-4.500 5"/></symbol>

    <g id="pole" stroke="#ff0" stroke-width="3" stroke-linecap="round" stroke-linejoin="round">
      <path d="M854 923l25 44v22M804 972l18-9-10-17 17-10 11 17 23-12M869 952l-39 21"/>
      <path fill="#ff0" stroke-width="1" d="M809 985l16-17 6 6v5z"/>
    </g>
    <pattern id="dots" x="349" y="174" width="163" height="163" patternUnits="userSpaceOnUse">
      <path stroke="#d4d4d4" d="M0 .5h1M40 .5h1M81 .5h1M122 .5h1M0 40.500h1M40 40.500h1M81 40.500h1M122 40.500h1M0 81.500h1M40 81.500h1M81 81.500h1M122 81.500h1M0 122.500h1M40 122.500h1M81 122.500h1M122 122.500h1"/>
    </pattern>
  </defs>
</svg>

<header class="titlebar">
  <svg class="logo" viewBox="0 0 20 20"><rect width="20" height="20" rx="3" fill="#dc1f2e"/><path stroke="#fff" stroke-width="2" fill="none" stroke-linejoin="round" d="M10 3l7 13H3z"/><path fill="#fff" d="M11 5l-3 6h2l-1 5 4-6h-2l1-4z"/></svg>
  <h1>EPLAN Electric P8 2.9 SP1 - D:\PLC_File\eplanProgram\learnEplan - =work1+Power/1 (learnEplan)</h1>
  <span class="shade"></span>
  <div class="winbtns">
    <button aria-label="最小化"><svg viewBox="0 0 14 14"><path stroke="#000" d="M1 6.500h12"/></svg></button>
    <button aria-label="还原"><svg viewBox="0 0 14 14"><path stroke="#000" d="M1.500 3.500h9v9h-9zM3.500 3V1.500h9v9H11"/></svg></button>
    <button aria-label="关闭"><svg viewBox="0 0 14 14"><path stroke="#000" d="M1 1l12 12M13 1L1 13"/></svg></button>
  </div>
</header>

<nav class="menubar">
  <button>项目 (P)</button><button>页 (A)</button><button>布局空间 (L)</button><button>编辑 (E)</button><button>视图 (V)</button><button>插入 (I)</button><button>项目数据 (R)</button><button>查找 (F)</button><button>选项 (O)</button><button>工具 (U)</button><button>窗口 (W)</button><button>帮助 (H)</button>
</nav>

<div class="toolrow">
  <div class="group">
    <button aria-label="新建项目"><svg><use href="#new"/></svg></button><button aria-label="打开项目"><svg><use href="#open"/></svg></button><button aria-label="关闭项目"><svg><use href="#closep"/></svg></button><button aria-label="打印"><svg><use href="#print"/></svg></button><i></i>
    <button aria-label="设置"><svg><use href="#wrench"/></svg></button><i></i>
    <button aria-label="剪切"><svg><use href="#cut"/></svg></button><button aria-label="复制"><svg><use href="#copy"/></svg></button><button aria-label="粘贴"><svg><use href="#paste"/></svg></button><i></i>
    <button aria-label="删除"><svg><use href="#seldel"/></svg></button><i></i>
    <button aria-label="复制格式"><svg><use href="#brush"/></svg></button><button aria-label="分配格式"><svg><use href="#brush2"/></svg></button><i></i>
    <button aria-label="撤消列表"><svg><use href="#undol"/></svg></button><button aria-label="撤消"><svg><use href="#undo"/></svg></button><button aria-label="恢复"><svg><use href="#redo"/></svg></button><button aria-label="恢复列表"><svg><use href="#redol"/></svg></button><i></i>
    <button aria-label="布局"><svg><use href="#layout"/></svg></button><button aria-label="更新布局"><svg><use href="#lay2"/></svg></button><button aria-label="检查"><svg><use href="#pcheck"/></svg></button><button aria-label="表格"><svg><use href="#gtable"/></svg></button>
  </div>
  <div class="group">
    <button aria-label="重新绘制"><svg><use href="#refresh"/></svg></button><button aria-label="缩放窗口"><svg><use href="#zwin"/></svg></button><button aria-label="放大"><svg><use href="#zin"/></svg></button><button aria-label="缩小"><svg><use href="#zout"/></svg></button><button aria-label="全部"><svg><use href="#z100"/></svg></button><i></i>
    <button aria-label="后退"><svg><use href="#left"/></svg></button><button aria-label="前进"><svg><use href="#right"/></svg></button><i></i>
    <button aria-label="栅格 A"><svg><use href="#gA"/></svg></button><button aria-label="栅格 B"><svg><use href="#gB"/></svg></button><button class="on" aria-label="栅格 C"><svg><use href="#gC"/></svg></button><button aria-label="栅格 D"><svg><use href="#gD"/></svg></button><button aria-label="栅格 E"><svg><use href="#gE"/></svg></button><i></i>
    <button class="on" aria-label="显示栅格"><svg><use href="#grid"/></svg></button><button class="on" aria-label="捕捉到栅格"><svg><use href="#gsnap"/></svg></button><button aria-label="对齐到栅格"><svg><use href="#galign"/></svg></button><button class="on" aria-label="对象捕捉"><svg><use href="#magnet"/></svg></button><button class="on" aria-label="设计模式"><svg><use href="#magnet2"/></svg></button><button class="on" aria-label="智能连接"><svg><use href="#smart"/></svg></button><button aria-label="坐标"><svg><use href="#num"/></svg></button><button class="on" aria-label="输入框"><svg><use href="#keys"/></svg></button><i></i>
    <button aria-label="路径"><svg><use href="#w1"/></svg></button><button aria-label="插入点"><svg><use href="#w2"/></svg></button><button aria-label="空白区域"><svg><use href="#w3"/></svg></button>
  </div>
  <div class="group">
    <button aria-label="设备"><svg><use href="#chip"/></svg></button><button aria-label="结构"><svg><use href="#tree"/></svg></button><i></i>
    <button aria-label="部件"><svg><use href="#cart"/></svg></button><button aria-label="文本"><svg><use href="#txt"/></svg></button>
  </div>
  <div class="group">
    <button aria-label="导航 1"><svg><use href="#d1"/></svg></button><button aria-label="导航 2"><svg><use href="#d2"/></svg></button><button aria-label="导航 3"><svg><use href="#d3"/></svg></button><button aria-label="导航 4"><svg><use href="#d4"/></svg></button><button aria-label="导航 5"><svg><use href="#d5"/></svg></button><i></i>
    <button aria-label="PLC"><svg><use href="#d6"/></svg></button><i></i>
    <button aria-label="电缆"><svg><use href="#d7"/></svg></button><i></i>
    <button aria-label="连接"><svg><use href="#d8"/></svg></button><button aria-label="电位"><svg><use href="#d9"/></svg></button><button aria-label="信号"><svg><use href="#d10"/></svg></button><button aria-label="流体"><svg><use href="#d11"/></svg></button><button aria-label="中断点"><svg><use href="#d12"/></svg></button><i></i>
    <button aria-label="部件列表"><svg><use href="#d13"/></svg></button><button aria-label="布局空间"><svg><use href="#d14"/></svg></button><button aria-label="部件主数据"><svg><use href="#d15"/></svg></button><i></i>
    <button aria-label="消息"><svg><use href="#d16"/></svg></button><button aria-label="宏"><svg><use href="#d17"/></svg></button><i></i>
    <button aria-label="任务"><svg><use href="#d18"/></svg></button><button aria-label="占位符"><svg><use href="#d19"/></svg></button><i></i>
    <button aria-label="箱柜"><svg><use href="#d20"/></svg></button><button aria-label="三维"><svg><use href="#d21"/></svg></button>
  </div>
</div>
<div class="toolrow last">
  <div class="group">
    <button aria-label="部件清单"><svg><use href="#wc"/></svg></button><button aria-label="更新清单"><svg><use href="#wcg"/></svg></button><i></i>
    <button aria-label="附加程序"><svg><use href="#puzzle"/></svg></button><i></i>
    <button aria-label="编号"><svg><use href="#n1"/></svg></button><button aria-label="端子编号"><svg><use href="#n2"/></svg></button><button aria-label="插针编号"><svg><use href="#n3"/></svg></button><i></i>
    <button aria-label="更新连接"><svg><use href="#busr"/></svg></button><i></i>
    <button aria-label="完成"><svg><use href="#f1"/></svg></button><button aria-label="标记"><svg><use href="#f2"/></svg></button><button aria-label="下一个"><svg><use href="#f3"/></svg></button><i></i>
    <button aria-label="记录"><svg><use href="#f4"/></svg></button><button aria-label="转到"><svg><use href="#f5"/></svg></button><i></i>
    <button aria-label="清除"><svg><use href="#f6"/></svg></button>
  </div>
  <div class="group">
    <button class="on" aria-label="页导航器"><svg><use href="#pg0"/></svg></button><button aria-label="新建页"><svg><use href="#pg1"/></svg></button><button aria-label="打开页"><svg><use href="#pg2"/></svg></button><button aria-label="关闭页"><svg><use href="#pg3"/></svg></button><button aria-label="上一页"><svg><use href="#pg4"/></svg></button><button aria-label="下一页"><svg><use href="#pg5"/></svg></button>
  </div>
  <div class="group">
    <button aria-label="结构标识符"><svg><use href="#st1"/></svg></button><i></i>
    <button aria-label="表格编辑"><svg><use href="#st2"/></svg></button><i></i>
    <button aria-label="选择 1"><svg><use href="#s1"/></svg></button><button aria-label="选择 2"><svg><use href="#s2"/></svg></button><button aria-label="选择 3"><svg><use href="#s3"/></svg></button><i></i>
    <button aria-label="端子排"><svg><use href="#t0"/></svg></button><button aria-label="插入 1"><svg><use href="#t1"/></svg></button><button aria-label="插入 2"><svg><use href="#t2"/></svg></button><button aria-label="插入 3"><svg><use href="#t3"/></svg></button><button aria-label="插入 4"><svg><use href="#t4"/></svg></button><button aria-label="插入 5"><svg><use href="#t5"/></svg></button><button aria-label="插入 6"><svg><use href="#t6"/></svg></button><button aria-label="插入 7"><svg><use href="#t7"/></svg></button><i></i>
    <button aria-label="电机 1"><svg><use href="#m1"/></svg></button><button aria-label="电机 2"><svg><use href="#m2"/></svg></button><i></i>
    <button aria-label="区域"><svg><use href="#h1"/></svg></button><button aria-label="填充"><svg><use href="#h2"/></svg></button><button aria-label="边框"><svg><use href="#h3"/></svg></button>
  </div>
  <div class="group">
    <button aria-label="端子"><svg><use href="#term"/></svg></button><i></i>
    <button aria-label="电缆定义"><svg><use href="#c1"/></svg></button><button aria-label="屏蔽"><svg><use href="#c2"/></svg></button><button class="on" aria-label="连接定义点"><svg><use href="#c3"/></svg></button><i></i>
    <button aria-label="电位定义点"><svg><use href="#c4"/></svg></button><button aria-label="电位连接点"><svg><use href="#c5"/></svg></button><i></i>
    <button aria-label="网络定义点"><svg><use href="#c6"/></svg></button><i></i>
    <button aria-label="线束"><svg><use href="#c7"/></svg></button>
  </div>
</div>

<main>
  <aside>
    <section class="panel grow">
      <header class="phead"><h2>页 - learnEplan</h2><button aria-label="菜单"><svg class="s-tri"><use href="#tri"/></svg></button><button aria-label="固定"><svg class="s-pin"><use href="#pin"/></svg></button><button class="red" aria-label="关闭"><svg><use href="#x"/></svg></button></header>
      <div class="pbody">
        <label for="filter">筛选器: (<u>F</u>)</label>
        <div class="filter">
          <div class="combo"><select id="filter"><option>- 未激活 -</option></select><svg viewBox="0 0 10 6"><path stroke="#444" d="M0 0l5 5 5-5"/></svg></div>
          <button class="more">...</button>
        </div>
        <label for="val">数值: (<u>V</u>)</label>
        <input id="val" type="text">
        <ul class="tree">
          <li><div class="row"><span class="tw down"><button aria-label="展开">+</button></span><svg><use href="#t-proj"/></svg><span>智控eplan</span></div></li>
          <li><div class="row"><span class="tw up down"><button aria-label="展开">+</button></span><svg><use href="#t-proj"/></svg><span>A01电路图20220921_V0.3</span></div></li>
          <li><div class="row"><span class="tw up"><button aria-label="折叠">−</button></span><svg><use href="#t-proj"/></svg><span>learnEplan</span></div>
            <ul>
              <li><div class="row"><span class="tw up"><button aria-label="折叠">−</button></span><svg><use href="#t-fn"/></svg><span>work1 (工艺1)</span></div>
                <ul>
                  <li><div class="row"><span class="tw up"><button aria-label="折叠">−</button></span><svg><use href="#t-loc"/></svg><span>Power (电源柜)</span></div>
                    <ul>
                      <li class="row"><b class="elbow"></b><svg><use href="#t-page"/></svg><span class="strong">1 电源分配</span></li>
                      <li class="row"><b class="elbow"></b><svg><use href="#t-page"/></svg><span>2 路径功能文本</span></li>
                      <li class="row"><b class="elbow"></b><svg><use href="#t-page"/></svg><span class="sel">3 电机回路</span></li>
                      <li class="row"><b class="elbow"></b><svg><use href="#t-page"/></svg><span>4 变频器控制电机回路</span></li>
                      <li class="row"><b class="elbow end"></b><svg><use href="#t-page"/></svg><span>5 关联参考</span></li>
                    </ul>
                  </li>
                </ul>
              </li>
            </ul>
          </li>
        </ul>
      </div>
      <div class="ptabs"><button class="cur">树</button><button>列表</button></div>
    </section>
    <section class="panel">
      <header class="phead"><h2>图形预览</h2><button aria-label="菜单"><svg class="s-tri"><use href="#tri"/></svg></button><button aria-label="固定"><svg class="s-pin"><use href="#pin"/></svg></button><button class="red" aria-label="关闭"><svg><use href="#x"/></svg></button></header>
      <div class="preview"><svg viewBox="0 0 315 342"><path stroke="#f00" stroke-width="33" stroke-linecap="round" d="M22 35l272 272"/></svg></div>
    </section>
  </aside>

  <section class="editor">
    <div class="tabs">
      <svg class="slant" viewBox="0 0 26 27"><path fill="#bcd0e9" d="M0 27L24 1h2v26z"/><path stroke="#a0a0a0" d="M0 26.500L24 .5h2"/></svg>
      <div class="tab"><a href="#page">=work1+Power/1 (learnEplan)</a><button class="red" aria-label="关闭标签"><svg><use href="#x"/></svg></button></div>
      <button class="drop" aria-label="标签列表"><svg class="s-tri"><use href="#tri"/></svg></button>
    </div>
    <div class="sheet" id="page">
      <svg>
        <g transform="translate(-331 -149)">
          <g stroke-width="3">
            <path stroke="#0f0" d="M331 214.500h630M960.500 213v694M981 214.500h2000M961 235l20-20"/>
            <path stroke="#ff8080" d="M331 296.500h712M1041.500 295v612M1062 296.500h2000M1042 317l20-20"/>
            <path stroke="#ff0" d="M878.500 149v780M960.500 907v22M1041.500 907v22M879 153l6-6"/>
            <path stroke="#f00" d="M331 377.500h220M532 459.500h20"/>
            <path stroke="#808000" d="M331 459.500h201"/>
            <path fill="#f00" stroke="#f00" stroke-width="1" stroke-linejoin="round" d="M544.500 366.500h2l28 11-28 12h-2zM544.500 448.500h2l28 11-28 11h-2z"/>
            <path stroke="#ff0" d="M868 948.500h10M884 948.500h10M950 948.500h10M966 948.500h10"/>
          </g>
          <use href="#pole"/><use href="#pole" x="82"/><use href="#pole" x="163"/>
          <g class="cad" fill="#ff0">
            <text class="big" x="582" y="393">N</text><text class="big" x="582" y="475">PE</text><text class="big" x="711" y="964">-QF1</text>
            <text class="small" x="885" y="887">L1</text><text class="small" x="966" y="887">L2</text><text class="small" x="1048" y="887">L3</text>
          </g>
          <g class="cad" fill="#0f0">
            <text class="mid" x="612" y="390">/</text><text class="mid" x="651" y="471">3.0</text><text class="mid" x="631" y="471">/</text>
            <text class="mid" x="885" y="917">1</text><text class="mid" x="966" y="917">3</text><text class="mid" x="1048" y="917">5</text>
            <text class="mid" x="885" y="1012">2</text><text class="mid" x="966" y="1012">4</text><text class="mid" x="1048" y="1012">6</text>
            <text class="kw" x="718" y="996">5.5KW</text>
          </g>
          <rect x="331" y="149" width="3000" height="2000" fill="url(#dots)"/>
          <path stroke="#fff" d="M331 500.500h3000M1286.500 149v2000"/>
          <path stroke="#f00" stroke-width="3" d="M1275 488l23 23"/>
          <path stroke="#f00" stroke-width="5" stroke-linecap="round" d="M1258 529c15 16 42 15 58-1"/>
          <path stroke="#f31df3" stroke-width="7" d="M1187.500 413.500h294v238h-294z"/>
          <path fill="#f31df3" d="M1299 494l13-12 2 4 211-61-208 68v4z"/>
          <text class="note" x="1536" y="430" fill="#f31df3">这个小的斜线是要的东西</text>
        </g>
      </svg>
    </div>
  </section>

  <div class="side">
    <div class="group v">
      <button aria-label="角 右下"><svg><use href="#r1"/></svg></button><button aria-label="角 左下"><svg><use href="#r2"/></svg></button><button aria-label="角 右上"><svg><use href="#r3"/></svg></button><button aria-label="角 左上"><svg><use href="#r4"/></svg></button><i></i>
      <button aria-label="T 节点 下"><svg><use href="#r5"/></svg></button><button aria-label="T 节点 上"><svg><use href="#r6"/></svg></button><button aria-label="T 节点 右"><svg><use href="#r7"/></svg></button><button aria-label="T 节点 左"><svg><use href="#r8"/></svg></button><i></i>
      <button aria-label="十字接头"><svg><use href="#r9"/></svg></button><button aria-label="跳线"><svg><use href="#r10"/></svg></button><i></i>
      <button aria-label="中断点"><svg><use href="#r11"/></svg></button><button aria-label="对角线"><svg><use href="#r12"/></svg></button>
    </div>
    <div class="group v">
      <button aria-label="直线"><svg><use href="#line"/></svg></button><button aria-label="折线"><svg><use href="#poly"/></svg></button><button aria-label="多边形"><svg><use href="#polyg"/></svg></button><button aria-label="长方形"><svg><use href="#rect"/></svg></button><button aria-label="中心长方形"><svg><use href="#rectc"/></svg></button><i></i>
      <button aria-label="圆"><svg><use href="#circ"/></svg></button><button aria-label="三点圆"><svg><use href="#circ3"/></svg></button><button aria-label="中心圆弧"><svg><use href="#arcc"/></svg></button><button aria-label="三点圆弧"><svg><use href="#arc3"/></svg></button><button aria-label="扇形"><svg><use href="#sect"/></svg></button><button aria-label="椭圆"><svg><use href="#ell"/></svg></button><i></i>
      <button aria-label="样条"><svg><use href="#spl"/></svg></button><i></i>
      <button aria-label="文本"><svg><use href="#T"/></svg></button><button aria-label="图片"><svg><use href="#img"/></svg></button><button aria-label="超链接"><svg><use href="#link"/></svg></button><i></i>
      <button aria-label="线性尺寸"><svg><use href="#dim1"/></svg></button><button aria-label="对齐尺寸"><svg><use href="#dim2"/></svg></button><button aria-label="连续尺寸"><svg><use href="#dim3"/></svg></button><button aria-label="递增尺寸"><svg><use href="#dim4"/></svg></button><button aria-label="基线尺寸"><svg><use href="#dim5"/></svg></button><button aria-label="角度尺寸"><svg><use href="#dim6"/></svg></button><button aria-label="半径尺寸"><svg><use href="#dim7"/></svg></button>
    </div>
  </div>
</main>

<footer>
  <div class="coords"><span>RX: 43.00</span><span>RY: 14.00</span></div>
  <div class="cell c-hint">旋转光标上的符号</div>
  <div class="cell c-open">打开: 4.00 mm</div>
  <div class="cell c-logic">逻辑 1:1</div>
  <div class="cell c-blank"></div>
  <div class="cell c-load"><svg viewBox="0 0 20 20"><path fill="#3fa47c" d="M7 0h6v7h5l-8 8-8-8h5zM0 14h3v3h14v-3h3v6H0z"/></svg></div>
  <div class="mark">CSDN @花崎泪</div>
</footer>
</body>
</html>
```
FILE: styles.css
```css
* { box-sizing: border-box; }

body {
  margin: 0;
  height: 100vh;
  display: flex;
  flex-direction: column;
  overflow: hidden;
  background: #fff;
  color: #000;
  font: 16px/20px Roboto, "Noto Sans CJK SC", sans-serif;
}

button { margin: 0; padding: 0; border: 0; background: none; font: inherit; color: inherit; }
svg { display: block; fill: none; }
h1, h2 { margin: 0; font-size: 16px; font-weight: 400; }
ul { margin: 0; padding: 0; list-style: none; }
.sprite { position: absolute; width: 0; height: 0; }

/* title bar */
.titlebar { display: flex; align-items: center; height: 29px; flex: none; padding: 0 3px 0 2px; }
.logo { width: 20px; height: 20px; margin-right: 5px; }
.titlebar h1 { flex: 1; white-space: nowrap; }
.shade { align-self: flex-start; width: 354px; height: 2px; background: #d6d6d6; box-shadow: 0 0 3px #bbb; margin-right: 54px; }
.winbtns { display: flex; }
.winbtns button { width: 58px; height: 29px; display: grid; place-items: center; }
.winbtns svg { width: 14px; height: 14px; }

/* menu */
.menubar { display: flex; align-items: center; gap: 16px; height: 29px; flex: none; padding: 0 0 2px 17px; border-top: 1px solid #eee; border-bottom: 1px solid #b0b0b0; }
.menubar::before { content: ""; width: 2px; height: 22px; margin: 0 -16px 0 -13px; background: repeating-linear-gradient(#c4c4c4 0 2px, transparent 2px 4px); }
.menubar button:first-of-type { margin-left: 11px; }

/* toolbars */
.toolrow { display: flex; height: 29px; flex: none; }
.toolrow.last { border-bottom: 1px solid #b0b0b0; }
.group { display: flex; align-items: center; border-right: 2px solid #b4b4b4; border-bottom: 1px solid #b4b4b4; }
.last .group { border-bottom: 0; }
.group::before { content: ""; width: 2px; height: 22px; margin: 0 4px; background: repeating-linear-gradient(#c4c4c4 0 2px, transparent 2px 4px); }
.group button { width: 24px; height: 24px; flex: none; }
.group svg { width: 24px; height: 24px; }
.group button.on { background: #cce8ff; box-shadow: inset 0 0 0 1px #99d1ff; }
.group i { width: 1px; height: 20px; flex: none; margin: 0 5px 0 2px; background: #909090; }

main { flex: 1; min-height: 0; display: flex; }

/* docked panels */
aside { width: 322px; flex: none; display: flex; flex-direction: column; gap: 4px; margin-right: 4px; }
.panel { display: flex; flex-direction: column; }
.grow { flex: 1; min-height: 0; }
.phead { display: flex; align-items: center; height: 28px; flex: none; gap: 6px; padding: 0 4px 0 3px; background: linear-gradient(#bfcbda, #d8e5f3); }
.phead h2 { flex: 1; }
.phead button { width: 14px; height: 14px; display: grid; place-items: center; }
.phead svg { width: 14px; height: 14px; }
.phead .s-tri, .drop .s-tri { width: 12px; height: 8px; }
.phead .s-pin { width: 12px; height: 14px; }
.red { background: #c75050; }
.pbody { flex: 1; min-height: 0; display: flex; flex-direction: column; margin-top: 2px; padding: 8px 2px 1px; background: #f0f0f0; border: solid #a0a0a0; border-width: 1px 1px 0; font-family: "Open Sans", "Noto Sans CJK SC", sans-serif; font-size: 15px; }
.filter { display: flex; gap: 12px; margin: 4px 0 12px; }
.combo { flex: 1; display: grid; align-items: center; }
.combo > * { grid-area: 1 / 1; }
.combo select { appearance: none; height: 28px; padding: 0 8px 0 3px; border: 1px solid #adadad; border-radius: 0; background: #e1e1e1; color: #000; font: inherit; }
.combo svg { width: 10px; height: 6px; justify-self: end; margin-right: 6px; pointer-events: none; overflow: visible; }
.more { width: 32px; height: 28px; border: 1px solid #adadad; background: #e1e1e1; }
#val { height: 29px; margin: 5px 0 11px; border: 2px solid #696969; border-color: #696969 #e3e3e3 #e3e3e3 #696969; box-shadow: inset 0 0 0 1px #808080; background: #f0f0f0; font: inherit; }
.tree { flex: 1; min-height: 0; overflow: hidden; padding: 2px 1px; background: #fff; border: 1px solid #828790; }
.tree ul { padding-left: 20px; }
.row { display: flex; align-items: center; height: 22px; }
.row > svg { width: 20px; height: 22px; flex: none; }
.row > span:last-child { flex: 1; line-height: 22px; margin-left: 3px; padding-left: 3px; white-space: nowrap; }
.row > .sel { background: #e1e1e1; }
.row > .strong { font-weight: 700; }
.tw { width: 20px; height: 22px; flex: none; display: grid; place-items: center; --d: repeating-linear-gradient(#999 0 1px, transparent 1px 3px); background-repeat: no-repeat; }
.tw.up { background-image: var(--d); background-size: 1px 6px; background-position: 10px 0; }
.tw.down { background-image: var(--d); background-size: 1px 6px; background-position: 10px 17px; }
.tw.up.down { background-size: 1px 22px; background-position: 10px 0; }
.tw button { width: 13px; height: 13px; border: 1px solid #919191; border-radius: 2px; background: #f8f8f8; color: #28488c; font: 15px/9px "Liberation Sans", sans-serif; }
.elbow { width: 10px; height: 22px; margin-left: 10px; flex: none; border-left: 1px dotted #999; }
.elbow::after { content: ""; display: block; height: 12px; border-bottom: 1px dotted #999; }
.elbow.end { height: 12px; align-self: flex-start; }
.ptabs { display: flex; height: 31px; flex: none; padding-left: 3px; background: #f7f7f7; border-top: 1px solid #000; margin-right: 1px; }
.ptabs button { height: 24px; margin-top: 3px; padding: 0 7px; border-right: 1px solid #b0b0b0; color: #8a8a8a; }
.ptabs .cur { height: 29px; margin-top: 0; padding: 0 6px 0 5px; background: #f0f0f0; color: #000; border: solid #000; border-width: 0 1px 1px 0; }
.preview { margin: 2px 2px 0 0; padding: 1px 1px 2px 2px; border: 1px solid #808080; border-right-color: #ddd; box-shadow: inset 0 1px #555; }
.preview svg { width: 100%; aspect-ratio: 315 / 342; background: #000; }

/* drawing editor */
.editor { flex: 1; min-width: 0; display: flex; flex-direction: column; border: solid #b0b0b0; border-width: 0 1px 1px; }
.tabs { display: flex; align-items: flex-end; height: 30px; flex: none; padding-left: 6px; background: #f7f7f7; border-bottom: 1px solid #a8a8a8; }
.slant { width: 26px; height: 27px; }
.tab { display: flex; align-items: center; gap: 11px; height: 27px; padding: 0 3px 0 5px; background: #bcd0e9; border-top: 1px solid #a0a0a0; border-right: 1px solid #a0a0a0; }
.tab a { color: #000; text-decoration: none; font-weight: 700; white-space: nowrap; }
.tab .red { width: 21px; height: 22px; display: grid; place-items: center; }
.tab .red svg { width: 14px; height: 14px; }
.drop { margin-left: auto; align-self: center; padding-right: 7px; }
.sheet { flex: 1; min-height: 0; display: flex; padding: 1px 2px 2px 3px; background: #bcd0e9; }
.sheet svg { flex: 1; min-width: 0; height: 100%; background: #000; border: solid #696969; border-width: 2px 0 0 1px; border-right: 2px solid #fff; border-bottom: 2px solid #fff; }
.cad text { font-family: "Liberation Serif", serif; }
.big { font-size: 34px; }
.mid { font-size: 28px; }
.kw { font-size: 24px; }
.small { font-size: 20px; }
.note { font-size: 23px; }

/* vertical toolbar */
.side { width: 28px; flex: none; min-height: 0; overflow: hidden; border-right: 1px solid #c0c0c0; border-bottom: 1px solid #c0c0c0; }
.group.v { flex-direction: column; border-right: 0; border-bottom: 2px solid #b4b4b4; }
.group.v::before { width: 22px; height: 2px; margin: 4px 0; background: repeating-linear-gradient(90deg, #c4c4c4 0 2px, transparent 2px 4px); }
.group.v i { width: 20px; height: 1px; margin: 2px 0 5px; }

/* status bar */
footer { display: flex; align-items: center; height: 26px; flex: none; background: #f0f0f0; border-top: 1px solid #d8d8d8; }
.coords { flex: 1; display: flex; gap: 20px; padding-left: 6px; }
.cell { height: 24px; line-height: 24px; padding-left: 4px; border-left: 1px solid #d0d0d0; color: #6d6d6d; white-space: nowrap; }
.c-hint { width: 486px; }
.c-open { width: 219px; }
.c-logic { width: 126px; }
.c-blank { width: 82px; }
.c-load { width: 84px; padding-top: 2px; }
.c-load svg { width: 20px; height: 20px; }
.mark { position: absolute; right: 14px; bottom: 6px; color: #8c8c8c; }
```
